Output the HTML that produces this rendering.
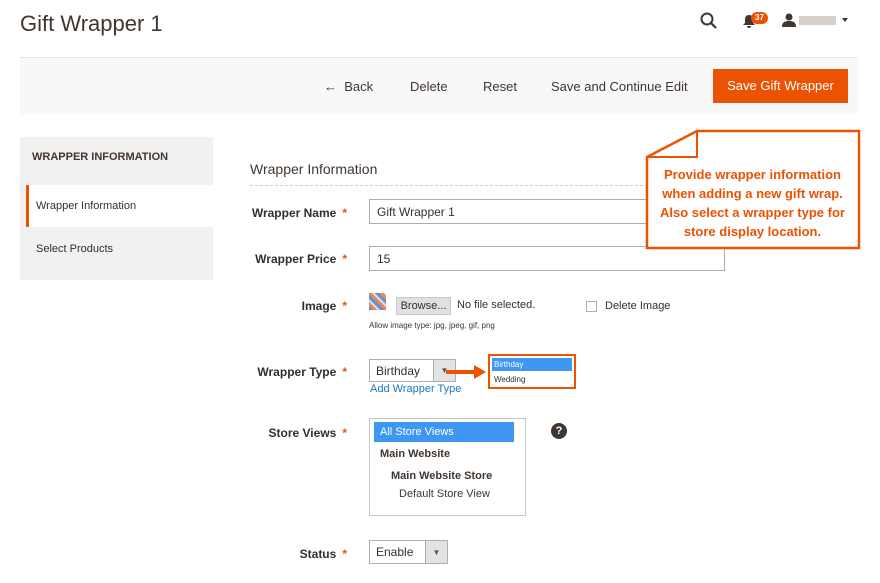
<!DOCTYPE html>
<html><head><style>
*{margin:0;padding:0;box-sizing:border-box}
body{width:880px;height:583px;background:#fff;font-family:"Liberation Sans",sans-serif;color:#303030;position:relative;overflow:hidden}
.a{position:absolute}
.lbl{position:absolute;font-size:12px;font-weight:bold;color:#303030;text-align:right;width:200px;left:147px}
.lbl span{color:#eb5202;margin-left:6px}
.inp{position:absolute;border:1px solid #adadad;background:#fff;font-size:12px;padding-left:7px;display:flex;align-items:center;color:#303030}
.sel{position:absolute;border:1px solid #adadad;background:#fff;font-size:12px;display:flex;align-items:center}
.sel .t{flex:1;padding-left:6px}
.sel .b{width:22px;height:100%;background:#e3e3e3;border-left:1px solid #adadad;display:flex;align-items:center;justify-content:center;font-size:8px;color:#555}
</style></head><body>
<div class="a" style="left:20px;top:11px;font-size:22px;color:#41362f">Gift Wrapper 1</div>
<svg class="a" style="left:700px;top:12px" width="18" height="18" viewBox="0 0 18 18"><circle cx="7" cy="7" r="5.5" fill="none" stroke="#41362f" stroke-width="2"/><path d="M11 11l5 5" stroke="#41362f" stroke-width="2.2"/></svg>
<svg class="a" style="left:742px;top:14px" width="14" height="15" viewBox="0 0 14 15"><path d="M7 1c3 0 4 2 4 5v3l2 2H1l2-2V6c0-3 1-5 4-5z M5 12h4a2 2 0 0 1-4 0z" fill="#41362f"/></svg>
<div class="a" style="left:751px;top:12px;width:17px;height:12px;border-radius:6px;background:#eb5202;color:#fff;font-size:8px;font-weight:bold;text-align:center;line-height:12px">37</div>
<svg class="a" style="left:782px;top:13px" width="14" height="14" viewBox="0 0 14 14"><circle cx="7" cy="4" r="3.5" fill="#41362f"/><path d="M0 14c0-5 3-6 7-6s7 1 7 6z" fill="#41362f"/></svg>
<div class="a" style="left:799px;top:16px;width:37px;height:9px;background:#d7cfcc"></div>
<div class="a" style="left:842px;top:18px;border:3.5px solid transparent;border-top:4px solid #41362f"></div>

<div class="a" style="left:20px;top:57px;width:838px;height:57px;background:#f8f8f8;border-top:1px solid #e3e3e3"></div>
<div class="a" style="left:324px;top:79px;font-size:13px;color:#41362f">&#8592;&nbsp; Back</div>
<div class="a" style="left:410px;top:79px;font-size:13px;color:#41362f">Delete</div>
<div class="a" style="left:483px;top:79px;font-size:13px;color:#41362f">Reset</div>
<div class="a" style="left:551px;top:79px;font-size:13px;color:#41362f">Save and Continue Edit</div>
<div class="a" style="left:713px;top:69px;width:135px;height:34px;background:#eb5202;color:#fff;font-size:13px;text-align:center;line-height:34px">Save Gift Wrapper</div>

<div class="a" style="left:20px;top:137px;width:193px;height:143px;background:#f1f1f1"></div>
<div class="a" style="left:32px;top:151px;font-size:11px;font-weight:bold;color:#41362f">WRAPPER INFORMATION</div>
<div class="a" style="left:26px;top:185px;width:187px;height:42px;background:#fff;border-left:3px solid #eb5202"></div>
<div class="a" style="left:36px;top:200px;font-size:11px;color:#303030">Wrapper Information</div>
<div class="a" style="left:36px;top:243px;font-size:11px;color:#303030">Select Products</div>

<div class="a" style="left:250px;top:161px;font-size:14px;color:#41362f">Wrapper Information</div>
<div class="a" style="left:250px;top:185px;width:608px;border-top:1px dashed #ccc"></div>

<div class="lbl" style="top:206px">Wrapper Name<span>*</span></div>
<div class="inp" style="left:369px;top:199px;width:356px;height:25px">Gift Wrapper 1</div>
<div class="lbl" style="top:252px">Wrapper Price<span>*</span></div>
<div class="inp" style="left:369px;top:246px;width:356px;height:25px">15</div>
<div class="lbl" style="top:299px">Image<span>*</span></div>
<div class="a" style="left:369px;top:293px;width:17px;height:17px;background:repeating-linear-gradient(45deg,#6a8fd0 0 3px,#e58a5a 3px 6px,#ddd 6px 8px)"></div>
<div class="a" style="left:396px;top:297px;width:55px;height:18px;background:#e0e0e0;border:1px solid #c8c8c8;font-size:11px;text-align:center;line-height:16px">Browse...</div>
<div class="a" style="left:457px;top:299px;font-size:11px">No file selected.</div>
<div class="a" style="left:586px;top:301px;width:11px;height:11px;border:1px solid #adadad"></div>
<div class="a" style="left:605px;top:300px;font-size:11px">Delete Image</div>
<div class="a" style="left:369px;top:321px;font-size:8px;color:#41362f">Allow image type: jpg, jpeg, gif, png</div>

<div class="lbl" style="top:365px">Wrapper Type<span>*</span></div>
<div class="sel" style="left:369px;top:359px;width:87px;height:23px"><span class="t">Birthday</span><span class="b">&#9660;</span></div>
<div class="a" style="left:370px;top:383px;font-size:11px;color:#1979c3">Add Wrapper Type</div>
<div class="a" style="left:446px;top:370px;width:30px;height:4px;background:#eb5202"></div>
<div class="a" style="left:474px;top:365px;border:7px solid transparent;border-left:12px solid #eb5202;border-right:0"></div>
<div class="a" style="left:488px;top:354px;width:88px;height:35px;border:2px solid #eb5202;background:#fff">
<div style="margin:2px;background:#3f97f4;color:#fff;font-size:8px;height:13px;line-height:13px;padding-left:2px">Birthday</div>
<div style="margin:0 2px;font-size:8px;height:13px;line-height:13px;padding-left:2px">Wedding</div></div>

<div class="lbl" style="top:426px">Store Views<span>*</span></div>
<div class="a" style="left:369px;top:418px;width:157px;height:98px;border:1px solid #c8c8c8"></div>
<div class="a" style="left:374px;top:422px;width:140px;height:20px;background:#3f97f4;color:#fff;font-size:11px;padding-left:6px;line-height:20px">All Store Views</div>
<div class="a" style="left:380px;top:448px;font-size:11px;font-weight:bold;color:#41362f">Main Website</div>
<div class="a" style="left:391px;top:470px;font-size:11px;font-weight:bold;color:#41362f">Main Website Store</div>
<div class="a" style="left:399px;top:488px;font-size:11px;color:#41362f">Default Store View</div>
<div class="a" style="left:551px;top:423px;width:16px;height:16px;border-radius:50%;background:#41362f;color:#fff;font-size:11px;font-weight:bold;text-align:center;line-height:16px">?</div>

<div class="lbl" style="top:547px">Status<span>*</span></div>
<div class="sel" style="left:369px;top:540px;width:79px;height:24px"><span class="t">Enable</span><span class="b">&#9660;</span></div>

<svg class="a" style="left:644px;top:129px" width="218" height="123" viewBox="0 0 218 123"><path d="M53 2H215V119H3V28z" fill="#fff" stroke="#eb5202" stroke-width="2.5"/><path d="M53 2V28H3" fill="none" stroke="#eb5202" stroke-width="2"/></svg>
<div class="a" style="left:646px;top:165px;width:213px;text-align:center;font-size:13px;font-weight:bold;color:#eb5202;line-height:19px">Provide wrapper information<br>when adding a new gift wrap.<br>Also select a wrapper type for<br>store display location.</div>
</body></html>
